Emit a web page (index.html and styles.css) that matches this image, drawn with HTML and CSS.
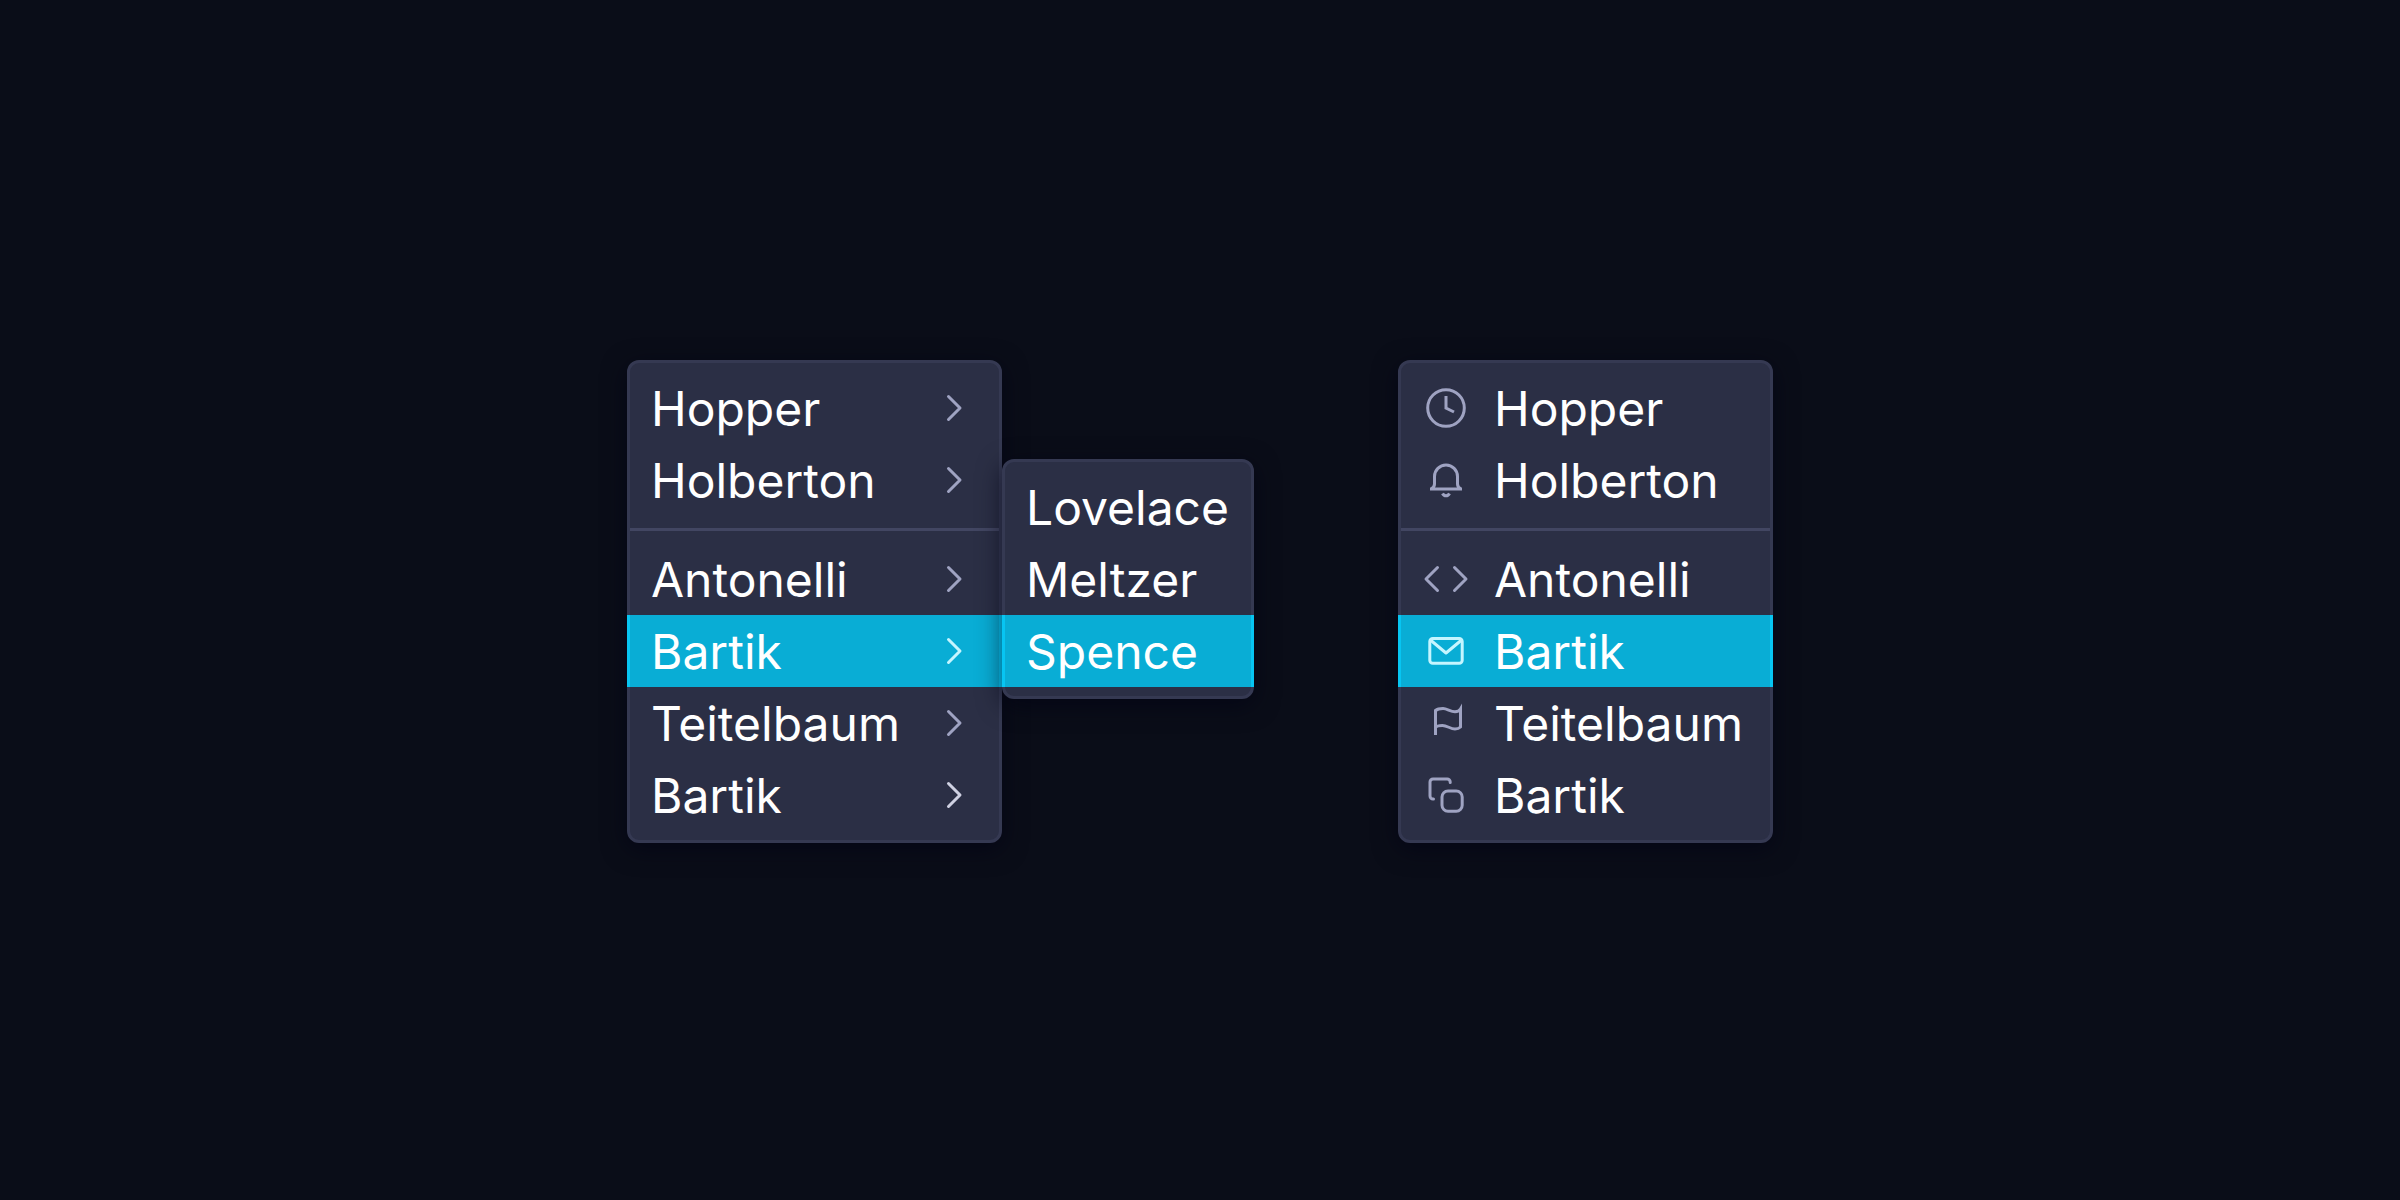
FILE: index.html
```html
<!DOCTYPE html>
<html lang="en">
<head>
<meta charset="utf-8">
<meta name="viewport" content="width=device-width, initial-scale=1">
<title>Menus</title>
<link rel="stylesheet" href="styles.css">
</head>
<body>
<svg class="sprite" aria-hidden="true">
  <symbol id="chevron" viewBox="0 0 48 48"><path d="M18.5 12.5 30 24 18.5 35.5"/></symbol>
  <symbol id="clock" viewBox="0 0 48 48"><circle cx="24" cy="24" r="18.3"/><path stroke-linecap="butt" stroke-linejoin="miter" d="M24 12v12l8 4"/></symbol>
  <symbol id="bell" viewBox="0 0 48 48"><path stroke-linecap="butt" d="M8 33H40M9 33c2-1 3.500-2 3.500-5V20.500a11.500 11.500 0 0 1 23 0V28c0 3 1.500 4 3.500 5"/><path stroke-linecap="butt" d="M20.500 37.500c1.500 3 5.500 3 7 0"/></symbol>
  <symbol id="code" viewBox="0 0 48 48"><path d="M15.500 12.500 4 24l11.500 11.500M32.500 12.500 44 24 32.500 35.500"/></symbol>
  <symbol id="mail" viewBox="0 0 48 48"><rect x="7.800" y="11.500" width="32.400" height="24.700" rx="3"/><path d="M9 13.500 24 26l15-12.500"/></symbol>
  <symbol id="flag" viewBox="0 0 48 48"><path stroke-linecap="butt" stroke-linejoin="miter" d="M13.500 36V11.500c1.500-1.300 4-2 7.500-2 4 0 7.500 3.200 12 3.200 3 0 4.500-1 5.500-2.700V28c-1 1-3 2-5.500 2-4.500 0-8-3.500-12.500-3.500-3.500 0-6 .5-7 2"/></symbol>
  <symbol id="copy" viewBox="0 0 48 48"><rect x="20" y="20" width="20.200" height="20.200" rx="6"/><path d="M28.200 11.500v-.5a3 3 0 0 0-3-3H11a3 3 0 0 0-3 3v14a3 3 0 0 0 3 3h.5"/></symbol>
</svg>
<main class="stage">
  <div class="cascade">
    <ul class="menu" role="menu" aria-label="Names">
      <li><button class="item" type="button"><span>Hopper</span><svg class="icon"><use href="#chevron"/></svg></button></li>
      <li><button class="item" type="button"><span>Holberton</span><svg class="icon"><use href="#chevron"/></svg></button></li>
      <li class="divider" role="separator"></li>
      <li><button class="item" type="button"><span>Antonelli</span><svg class="icon"><use href="#chevron"/></svg></button></li>
      <li><button class="item active" type="button" aria-expanded="true"><span>Bartik</span><svg class="icon"><use href="#chevron"/></svg></button></li>
      <li><button class="item" type="button"><span>Teitelbaum</span><svg class="icon"><use href="#chevron"/></svg></button></li>
      <li><button class="item" type="button"><span>Bartik</span><svg class="icon bright"><use href="#chevron"/></svg></button></li>
    </ul>
    <ul class="menu submenu" role="menu" aria-label="Bartik">
      <li><button class="item" type="button"><span>Lovelace</span></button></li>
      <li><button class="item" type="button"><span>Meltzer</span></button></li>
      <li><button class="item active" type="button"><span>Spence</span></button></li>
    </ul>
  </div>
  <ul class="menu with-icons" role="menu" aria-label="Names with icons">
    <li><button class="item" type="button"><svg class="icon"><use href="#clock"/></svg><span>Hopper</span></button></li>
    <li><button class="item" type="button"><svg class="icon"><use href="#bell"/></svg><span>Holberton</span></button></li>
    <li class="divider" role="separator"></li>
    <li><button class="item" type="button"><svg class="icon"><use href="#code"/></svg><span>Antonelli</span></button></li>
    <li><button class="item active" type="button"><svg class="icon"><use href="#mail"/></svg><span>Bartik</span></button></li>
    <li><button class="item" type="button"><svg class="icon"><use href="#flag"/></svg><span>Teitelbaum</span></button></li>
    <li><button class="item" type="button"><svg class="icon"><use href="#copy"/></svg><span>Bartik</span></button></li>
  </ul>
</main>
</body>
</html>
```
FILE: styles.css
```css
* {
  box-sizing: border-box;
}

body {
  margin: 0;
  background: #0a0d18;
  color: #fff;
  font-family: Inter, "Liberation Sans", sans-serif;
}

.sprite {
  display: none;
}

.stage {
  display: flex;
  justify-content: center;
  align-items: center;
  gap: 144px;
  min-height: 100vh;
  padding-top: 3px;
}

.cascade {
  display: flex;
  align-items: flex-start;
}

.menu {
  width: 375px;
  margin: 0;
  padding: 9px 0;
  list-style: none;
  background: #2b2f45;
  border: 3px solid #353952;
  border-radius: 12px;
  box-shadow: 0 6px 24px rgba(0, 0, 20, 0.6);
}

.submenu {
  width: 252px;
  margin-top: 99px;
}

.menu li {
  margin: 0 -3px;
}

.menu .divider {
  height: 3px;
  margin: 12px 0;
  background: #424662;
}

.item {
  display: flex;
  align-items: center;
  justify-content: space-between;
  width: 100%;
  height: 72px;
  padding: 0 21px;
  border: 0 solid transparent;
  border-width: 0 3px;
  background: none;
  color: inherit;
  font: inherit;
  font-size: 48px;
  line-height: 60px;
  text-align: left;
  white-space: nowrap;
}

.item span {
  padding-top: 2px;
}

.with-icons .item {
  justify-content: flex-start;
  gap: 24px;
}

.item.active {
  background: #09add5;
  border-color: #07c5f2;
}

.icon {
  flex: none;
  width: 48px;
  height: 48px;
  fill: none;
  stroke: #9fa3c2;
  stroke-width: 3;
  stroke-linecap: round;
  stroke-linejoin: round;
}

.active .icon {
  stroke: #c5f5ff;
}

.icon.bright {
  stroke: #cfd1e2;
}
```
